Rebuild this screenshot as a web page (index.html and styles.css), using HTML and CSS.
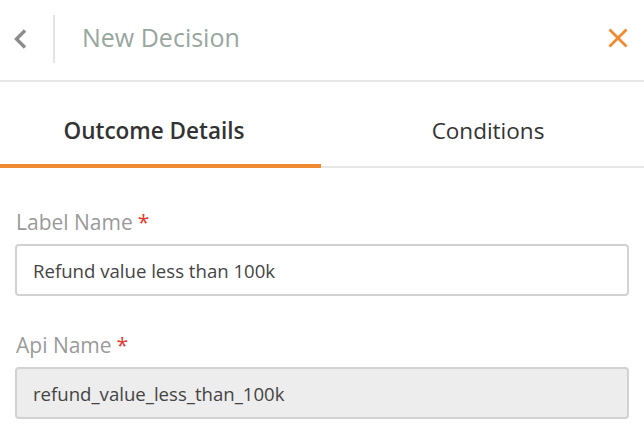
FILE: index.html
```html
<!DOCTYPE html>
<html>
<head>
<meta charset="utf-8">
<link rel="stylesheet" href="styles.css">
</head>
<body>
<div class="panel">
  <header class="header">
    <button class="back" aria-label="Back">
      <svg width="16" height="22" viewBox="0 0 16 22"><path d="M13 2.5 L4.5 11 L13 19.5" fill="none" stroke="#8c8c8c" stroke-width="3.4"/></svg>
    </button>
    <div class="divider"></div>
    <h1 class="title">New Decision</h1>
    <button class="close" aria-label="Close">
      <svg width="22" height="22" viewBox="0 0 22 22"><path d="M2.5 2.5 L19.5 19.5 M19.5 2.5 L2.5 19.5" fill="none" stroke="#f08a30" stroke-width="2.8"/></svg>
    </button>
  </header>
  <nav class="tabs">
    <div class="tab active">Outcome Details</div>
    <div class="tab second">Conditions</div>
  </nav>
  <form class="form">
    <div class="field">
      <label class="label">Label Name<span class="req">*</span></label>
      <div class="input">Refund value less than 100k</div>
    </div>
    <div class="field">
      <label class="label">Api Name<span class="req">*</span></label>
      <div class="input disabled">refund_value_less_than_100k</div>
    </div>
  </form>
</div>
</body>
</html>
```

FILE: styles.css
```css
* { box-sizing: border-box; }
html, body { margin: 0; padding: 0; background: #fff; }
body { font-family: "Open Sans", "Noto Sans", sans-serif; }
.panel { width: 644px; }
.header {
  height: 82px;
  display: flex;
  align-items: center;
  border-bottom: 2px solid #e6e6e6;
}
.back, .close { background: none; border: none; padding: 0; display: flex; align-items: center; justify-content: center; cursor: pointer; }
.back { width: 16px; margin-left: 12px; height: 30px; margin-bottom: 2px; }
.divider { width: 2px; height: 48px; background: #e4e4e4; margin-left: 25px; margin-bottom: 2px; }
.title {
  margin: 0 0 0 27px;
  font-size: 25px;
  font-weight: 400;
  color: #98a69f;
  flex: 1;
  line-height: 1;
  padding-bottom: 6px;
}
.close { width: 26px; height: 26px; margin-right: 13px; margin-bottom: 4px; }
.tabs {
  display: flex;
  height: 86px;
  border-bottom: 2px solid #e6e6e6;
}
.tab {
  flex: 0 0 322px;
  display: flex;
  align-items: center;
  justify-content: center;
  font-size: 22.5px;
  color: #333;
  padding-top: 12px;
}
.tab.active {
  flex-basis: 321px;
  font-weight: 600;
  border-bottom: 4px solid #f08a32;
  margin-bottom: -2px;
  padding-top: 14px;
  padding-right: 13px;
}
.tab.second { flex-basis: 323px; padding-left: 11px; }
.form { padding: 0 15px 0 15px; }
.field { margin-top: 36px; }
.field:first-child { margin-top: 41px; }
.label {
  display: block;
  font-size: 21px;
  color: #9a9a9a;
  line-height: 27px;
  padding-left: 1px;
  margin-bottom: 8px;
}
.req { color: #e23b2e; margin-left: 5px; }
.input {
  height: 52px;
  border: 2px solid #d2d2d2;
  border-radius: 4px;
  padding: 0 16px;
  display: flex;
  align-items: center;
  font-size: 18.6px;
  color: #444;
}
.input.disabled { background: #ededed; }
```
